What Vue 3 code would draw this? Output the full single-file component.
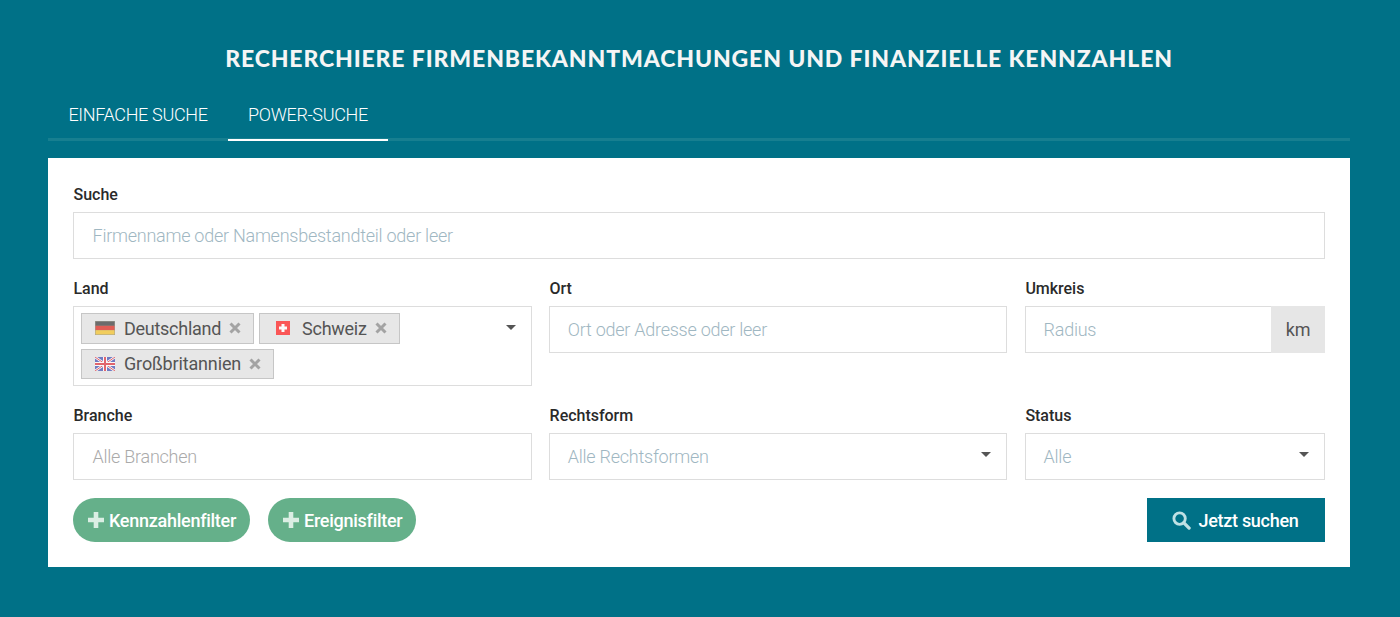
<template>
  <div class="page">
    <h1 class="title">Recherchiere Firmenbekanntmachungen und finanzielle Kennzahlen</h1>
    <nav class="tabs">
      <a class="tab">EINFACHE SUCHE</a>
      <a class="tab active">POWER-SUCHE</a>
    </nav>
    <form class="panel" @submit.prevent>
      <div class="field">
        <label>Suche</label>
        <div class="input inset"><span class="ph">Firmenname oder Namensbestandteil oder leer</span></div>
      </div>
      <div class="grid">
        <div class="field">
          <label>Land</label>
          <div class="multi">
            <div class="tags">
              <span class="tag">
                <svg class="flag" viewBox="0 0 20 14"><rect width="20" height="14" fill="#8a8a7a"/><rect x=".5" y=".5" width="19" height="4.300" fill="#444"/><rect x=".5" y="4.800" width="19" height="4.400" fill="#e03025"/><rect x=".5" y="9.200" width="19" height="4.300" fill="#f5c530"/></svg>
                <span>Deutschland</span><svg class="x" viewBox="0 0 12 12"><path d="M1.500 1.500l9 9M10.500 1.500l-9 9" stroke="#a3a3a3" stroke-width="3"/></svg>
              </span>
              <span class="tag">
                <svg class="flag-ch" viewBox="0 0 14 14"><rect width="14" height="14" fill="#f33"/><path d="M5.500 3h3v2.500H11v3H8.500V11h-3V8.500H3v-3h2.500z" fill="#fff"/></svg>
                <span>Schweiz</span><svg class="x" viewBox="0 0 12 12"><path d="M1.500 1.500l9 9M10.500 1.500l-9 9" stroke="#a3a3a3" stroke-width="3"/></svg>
              </span>
              <span class="tag tag-wide">
                <svg class="flag" viewBox="0 0 20 14"><rect width="20" height="14" fill="#4a58b5"/><path d="M0 0l20 14M20 0L0 14" stroke="#fff" stroke-width="2.500"/><path d="M0 0l20 14M20 0L0 14" stroke="#e03a45" stroke-width="1"/><path d="M10 0v14M0 7h20" stroke="#fff" stroke-width="4"/><path d="M10 0v14M0 7h20" stroke="#e03a45" stroke-width="2"/></svg>
                <span>Großbritannien</span><svg class="x" viewBox="0 0 12 12"><path d="M1.500 1.500l9 9M10.500 1.500l-9 9" stroke="#a3a3a3" stroke-width="3"/></svg>
              </span>
            </div>
            <i class="caret"></i>
          </div>
        </div>
        <div class="field">
          <label>Ort</label>
          <div class="input"><span class="ph">Ort oder Adresse oder leer</span></div>
        </div>
        <div class="field">
          <label>Umkreis</label>
          <div class="group">
            <div class="input grow"><span class="ph">Radius</span></div>
            <span class="addon">km</span>
          </div>
        </div>
        <div class="field">
          <label>Branche</label>
          <div class="input inset"><span class="ph warm">Alle Branchen</span></div>
        </div>
        <div class="field">
          <label>Rechtsform</label>
          <div class="input"><span class="ph">Alle Rechtsformen</span><i class="caret"></i></div>
        </div>
        <div class="field">
          <label>Status</label>
          <div class="input"><span class="ph">Alle</span><i class="caret"></i></div>
        </div>
      </div>
      <div class="actions">
        <button class="pill" type="button"><svg class="plus" viewBox="0 0 16 16"><path d="M5.700 0h4.600v5.700H16v4.600h-5.700V16H5.700v-5.700H0V5.700h5.700z" fill="#dbeee4"/></svg>Kennzahlenfilter</button>
        <button class="pill" type="button"><svg class="plus" viewBox="0 0 16 16"><path d="M5.700 0h4.600v5.700H16v4.600h-5.700V16H5.700v-5.700H0V5.700h5.700z" fill="#dbeee4"/></svg>Ereignisfilter</button>
        <button class="go" type="submit">
          <svg class="glass" viewBox="0 0 20 20"><circle cx="8" cy="8" r="6" fill="none" stroke="#bfe0e4" stroke-width="3"/><path d="M12.500 12.500L18 18" stroke="#bfe0e4" stroke-width="3.500" stroke-linecap="round"/></svg>
          Jetzt suchen
        </button>
      </div>
    </form>
  </div>
</template>

<script setup>
</script>

<style scoped>
.page {
  box-sizing: border-box;
  height: 617px;
  padding: 0 50px 0 48px;
  background: #007187;
  font-family: Roboto, "Liberation Sans", sans-serif;
  overflow: hidden;
}
.title {
  margin: 0;
  padding-top: 44px;
  height: 76px;
  box-sizing: border-box;
  font-family: Lato, "Liberation Sans", sans-serif;
  font-size: 23px;
  line-height: 28px;
  font-weight: 900;
  letter-spacing: .87px;
  text-transform: uppercase;
  text-align: center;
  color: #f5f5f5;
}
.tabs {
  display: flex;
  height: 65px;
  box-sizing: border-box;
  border-bottom: 3px solid #177f90;
}
.tab {
  box-sizing: border-box;
  width: 160px;
  height: 65px;
  padding-top: 26px;
  font-size: 18px;
  line-height: 26px;
  font-weight: 300;
  letter-spacing: -.33px;
  text-align: center;
  color: #fff;
}
.tab:first-child { width: 180px; }
.tab.active { border-bottom: 2px solid #fff; }
.panel {
  margin-top: 17px;
  padding: 25px;
  background: #fff;
}
.field label {
  display: block;
  box-sizing: border-box;
  height: 22px;
  margin-bottom: 7px;
  padding: 1px 0 0 .5px;
  font-size: 16px;
  line-height: 22px;
  font-weight: 500;
  letter-spacing: -.02px;
  color: #2a2a2a;
}
.grid {
  display: grid;
  grid-template-columns: 458.6fr 458.3fr 300.1fr;
  column-gap: 17.5px;
  row-gap: 18px;
  margin-top: 18px;
  align-items: start;
}
.input {
  position: relative;
  display: flex;
  align-items: center;
  box-sizing: border-box;
  height: 47px;
  padding: 0 18px 0 17.7px;
  border: 1px solid #ddd;
  background: #fff;
}
.input.inset { padding-left: 18.5px; }
.ph {
  font-size: 18px;
  font-weight: 300;
  letter-spacing: -.25px;
  color: #9fb7c2;
}
.ph.warm { color: #aaa; }
.multi {
  position: relative;
  box-sizing: border-box;
  height: 80px;
  padding: 6px 7px;
  border: 1px solid #ddd;
}
.tags {
  display: flex;
  flex-wrap: wrap;
  gap: 5px;
  width: 400px;
}
.tag {
  display: inline-flex;
  align-items: center;
  box-sizing: border-box;
  height: 30.5px;
  padding: 0 12px 0 13px;
  border: 1px solid #c6c6c6;
  background: #e7e7e7;
  color: #555;
  font-size: 18px;
  letter-spacing: -.27px;
}
.tag-wide { letter-spacing: -.15px; }
.flag { width: 20px; height: 14px; margin-right: 9px; opacity: .75; }
.flag-ch { width: 14px; height: 14px; margin: 0 12px 0 3px; opacity: .8; }
.x {
  width: 12px;
  height: 12px;
  margin-left: 8px;
}
.caret {
  position: absolute;
  right: 15px;
  top: 18px;
  width: 0;
  height: 0;
  border-left: 5px solid transparent;
  border-right: 5px solid transparent;
  border-top: 5px solid #555;
}
.group { display: flex; }
.grow { flex: 1; min-width: 0; }
.input.grow { border-right: none; }
.addon {
  width: 54px;
  height: 47px;
  line-height: 47px;
  text-align: center;
  background: #e6e6e6;
  color: #555;
  font-size: 18px;
  letter-spacing: -.25px;
}
.actions {
  display: flex;
  gap: 18px;
  margin-top: 18px;
}
.pill {
  display: inline-flex;
  align-items: center;
  justify-content: center;
  height: 44px;
  padding: 0 14px 0 15px;
  border: none;
  border-radius: 22px;
  background: #65b08a;
  color: #fff;
  font-family: inherit;
  font-size: 18px;
  font-weight: 500;
  letter-spacing: -.27px;
}
.plus { width: 16px; height: 16px; margin-right: 5px; }
.go {
  display: inline-flex;
  align-items: center;
  justify-content: center;
  margin-left: auto;
  width: 178px;
  height: 44px;
  padding: 0 2px 0 0;
  border: none;
  background: #007187;
  color: #fff;
  font-family: inherit;
  font-size: 18px;
  font-weight: 500;
  letter-spacing: -.3px;
}
.glass { width: 19px; height: 19px; margin-right: 8px; }
</style>
